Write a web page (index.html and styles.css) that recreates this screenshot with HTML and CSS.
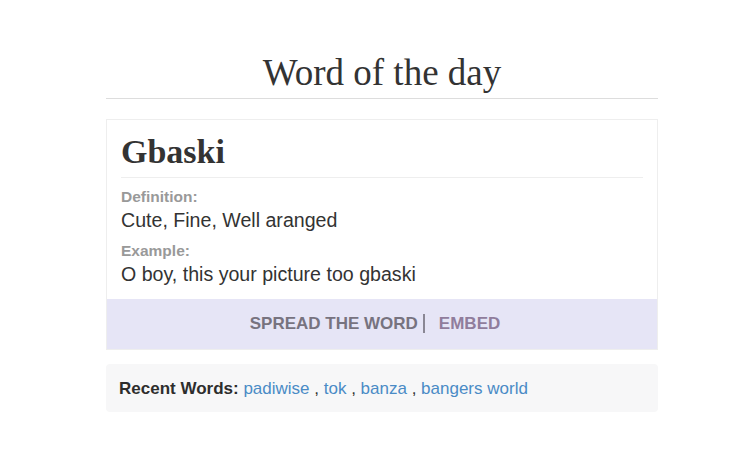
FILE: index.html
```html
<!DOCTYPE html>
<html>
<head>
<meta charset="utf-8">
<link rel="stylesheet" href="styles.css">
</head>
<body>
<div class="wrap">
  <h1 class="title">Word of the day</h1>
  <div class="card">
    <div class="card-body">
      <h2 class="word">Gbaski</h2>
      <div class="label">Definition:</div>
      <div class="value">Cute, Fine, Well aranged</div>
      <div class="label label-2">Example:</div>
      <div class="value">O boy, this your picture too gbaski</div>
    </div>
    <div class="card-foot">
      <span class="spread">SPREAD THE WORD</span><span class="embed">EMBED</span>
    </div>
  </div>
  <div class="recent">
    <b>Recent Words:</b> <a href="#">padiwise</a> , <a href="#">tok</a> , <a href="#">banza</a> , <a href="#">bangers world</a>
  </div>
</div>
</body>
</html>
```
FILE: styles.css
```css
html, body { margin: 0; padding: 0; background: #fff; }
body { font-family: "Liberation Sans", Arial, sans-serif; color: #333; }
.wrap { width: 552px; margin-left: 106px; padding-top: 51px; }
.title {
  margin: 0;
  font-family: "Liberation Serif", "Times New Roman", serif;
  font-weight: normal;
  font-size: 37px;
  line-height: 43px;
  text-align: center;
  color: #333;
  padding-bottom: 4px;
  border-bottom: 1px solid #ddd;
}
.card { margin-top: 20px; border: 1px solid #eee; }
.card-body { padding: 12px 14px 12px; }
.word {
  margin: 0;
  font-family: "Liberation Serif", "Times New Roman", serif;
  font-weight: bold;
  font-size: 34px;
  line-height: 40px;
  color: #333;
  padding-bottom: 5px;
  border-bottom: 1px solid #eee;
  margin-bottom: 9px;
}
.label { font-size: 15.5px; line-height: 20px; font-weight: bold; color: #999; }
.label-2 { margin-top: 8px; }
.value { font-size: 19.6px; line-height: 25px; color: #333; margin-top: 1px; }
.card-foot {
  background: #e6e5f6;
  text-align: center;
  padding: 14px 14px 14px 0;
  line-height: 22px;
  font-size: 17px;
  font-weight: bold;
}
.spread { color: #77737f; padding-right: 5px; border-right: 2px solid #8a8794; }
.embed { color: #907d9c; margin-left: 14px; }
.recent {
  margin-top: 14px;
  background: #f7f7f8;
  border-radius: 4px;
  padding: 15px 13px 13px;
  line-height: 20px;
  font-size: 17px;
  color: #333;
}
.recent b { color: #2d2d2d; }
.recent a { color: #4a8bc6; text-decoration: none; }
```
